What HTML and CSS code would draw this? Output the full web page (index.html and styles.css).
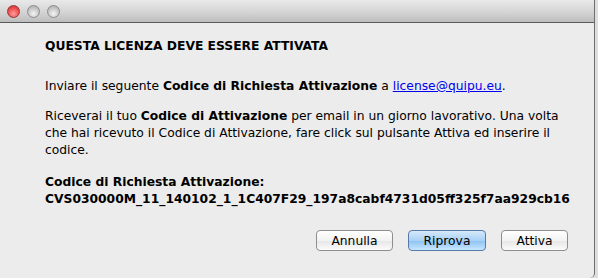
FILE: index.html
```html
<!DOCTYPE html>
<html lang="it">
<head>
    <meta charset="UTF-8">
    <title>Attivazione licenza</title>
    <link rel="stylesheet" href="styles.css">
</head>
<body>
    <div class="window">
        <div class="titlebar">
            <span class="light close"></span>
            <span class="light"></span>
            <span class="light"></span>
        </div>
        <div class="content">
            <h1>QUESTA LICENZA DEVE ESSERE ATTIVATA</h1>
            <p class="request">Inviare il seguente <b>Codice di Richiesta Attivazione</b> a <a href="mailto:license@quipu.eu">license@quipu.eu</a>.</p>
            <p class="info">Riceverai il tuo <b>Codice di Attivazione</b> per email in un giorno lavorativo. Una volta che hai ricevuto il Codice di Attivazione, fare click sul pulsante Attiva ed inserire il codice.</p>
            <p class="code"><b>Codice di Richiesta Attivazione:<br>CVS030000M_11_140102_1_1C407F29_197a8cabf4731d05ff325f7aa929cb16</b></p>
            <div class="actions">
                <button class="btn annulla">Annulla</button>
                <button class="btn default riprova">Riprova</button>
                <button class="btn attiva">Attiva</button>
            </div>
        </div>
    </div>
</body>
</html>
```

FILE: styles.css
```css
body {
    margin: 0;
    background: #dedede;
    font-family: "DejaVu Sans", Verdana, sans-serif;
    font-size: 12.3px;
    color: #000;
}
.window {
    width: 594px;
    height: 278px;
    background: #ececec;
    border-right: 1px solid #6e6e6e;
    border-radius: 0 0 5px 0;
    overflow: hidden;
}
.titlebar {
    height: 22px;
    background: linear-gradient(#e9e9e9, #d2d2d2 60%, #bdbdbd);
    border-bottom: 1px solid #5a5a5a;
    display: flex;
    align-items: center;
    gap: 7px;
    padding-left: 7px;
}
.light {
    width: 13px;
    height: 13px;
    border-radius: 50%;
    background: radial-gradient(circle at 50% 70%, #f4f4f4, #c4c4c4 60%, #a6a6a6);
    border: 1px solid #8c8c8c;
    box-sizing: border-box;
}
.light.close {
    background: radial-gradient(circle at 50% 70%, #ff9c9c, #ec4b4b 60%, #c02a2a);
    border-color: #9a3434;
}
.content {
    padding: 15px 0 0 45px;
    line-height: 17px;
}
h1 {
    font-size: 12.3px;
    font-weight: bold;
    margin: 0 0 23px;
}
p {
    margin: 0;
}
.request {
    margin-bottom: 13px;
}
.info {
    width: 530px;
    margin-bottom: 15px;
}
a {
    color: #0000ee;
}
.actions {
    display: flex;
    gap: 15px;
    margin: 22px 0 0 271px;
}
.btn {
    font-family: inherit;
    font-size: 12.3px;
    height: 21px;
    padding: 0;
    border: 1px solid #8e8e8e;
    border-radius: 4px;
    background: linear-gradient(#ffffff, #f3f3f3 50%, #e6e6e6 51%, #fbfbfb);
    color: #000;
}
.annulla { width: 77px; }
.riprova { width: 78px; }
.attiva { width: 67px; }
.default {
    border-color: #5679a8;
    background: linear-gradient(#d6e9fa, #a8d1f6 50%, #8cc2f2 51%, #c8e6ff);
}
```
